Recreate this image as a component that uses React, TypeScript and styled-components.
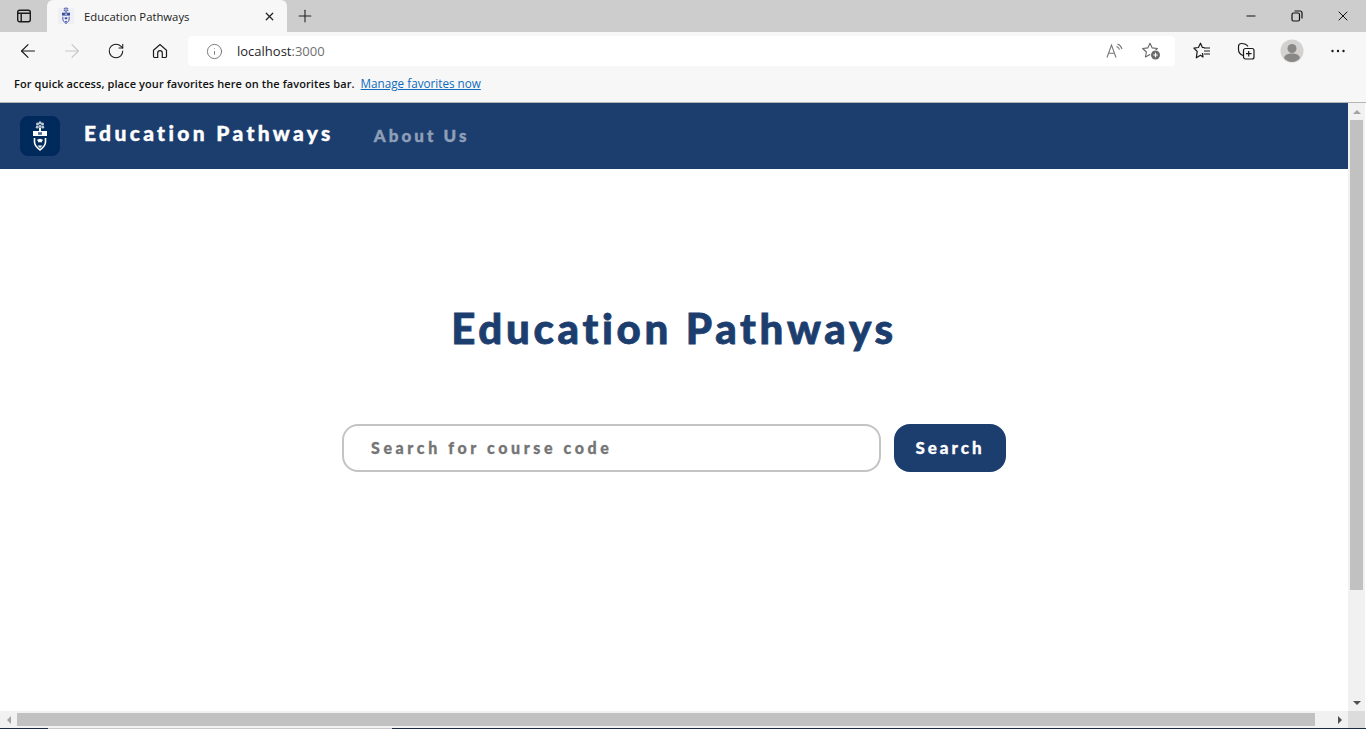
import React from 'react';
import styled, { createGlobalStyle } from 'styled-components';
import { Info, Minus, Plus, X, RotateCw, ArrowLeft, ArrowRight } from 'lucide-react';

const GlobalStyle = createGlobalStyle`
    html, body {
        margin: 0;
        padding: 0;
        height: 100%;
        overflow: hidden;
    }
    body {
        font-family: 'Open Sans', 'Liberation Sans', sans-serif;
    }
`;

const Window = styled.div`
    width: 1366px;
    height: 729px;
    display: flex;
    flex-direction: column;
    background: #fff;
    overflow: hidden;
`;

const TabStrip = styled.div`
    height: 32px;
    flex: none;
    display: flex;
    background: #cdcdcd;
`;

const TabToggle = styled.div`
    width: 47px;
    display: flex;
    align-items: center;
    justify-content: center;
`;

const Tab = styled.div`
    width: 240px;
    height: 32px;
    display: flex;
    align-items: center;
    box-sizing: border-box;
    padding: 0 11px;
    background: #f7f7f7;
    border-radius: 6px 6px 0 0;
    font-size: 11.3px;
    color: #222;
`;

const TabIcon = styled.div`
    width: 16px;
    height: 16px;
    margin-right: 10px;
    background: #eef0f6;
    display: flex;
    align-items: center;
    justify-content: center;
`;

const TabTitle = styled.span`
    flex: 1;
`;

const NewTab = styled.div`
    width: 36px;
    display: flex;
    align-items: center;
    justify-content: center;
`;

const TabSpacer = styled.div`
    flex: 1;
`;

const WindowButton = styled.div`
    width: 46px;
    display: flex;
    align-items: center;
    justify-content: center;
`;

const Toolbar = styled.div`
    height: 38px;
    flex: none;
    display: flex;
    align-items: center;
    background: #f7f7f7;
    box-sizing: border-box;
    padding-left: 6px;
`;

const NavButton = styled.div`
    width: 44px;
    height: 32px;
    display: flex;
    align-items: center;
    justify-content: center;
`;

const AddressBar = styled.div`
    width: 987px;
    height: 30px;
    margin-left: 6px;
    display: flex;
    align-items: center;
    box-sizing: border-box;
    padding: 0 6px 0 18px;
    background: #fff;
    border-radius: 4px;
    font-size: 13px;
    color: #1f1f1f;
`;

const Host = styled.span`
    margin-left: 14px;
    flex: 1;
`;

const Port = styled.span`
    color: #6f6f6f;
`;

const AddressAction = styled.div`
    width: 36px;
    display: flex;
    align-items: center;
    justify-content: center;
`;

const ToolButton = styled.div<{ $width: number }>`
    width: ${(p) => p.$width}px;
    height: 32px;
    display: flex;
    align-items: center;
    justify-content: center;
`;

const ToolGroup = styled.div`
    display: flex;
    margin-left: 5px;
`;

const FavoritesBar = styled.div`
    height: 33px;
    flex: none;
    display: flex;
    align-items: center;
    box-sizing: border-box;
    padding: 0 0 6px 14px;
    background: #f7f7f7;
    border-bottom: 1px solid #b5b5b5;
    font-size: 11px;
    font-weight: 600;
    letter-spacing: 0.09px;
    color: #111;
`;

const FavoritesLink = styled.a`
    margin-left: 6px;
    color: #0f6cbd;
    text-decoration: underline;
    font-size: 11.7px;
    font-weight: 400;
    letter-spacing: 0;
`;

const Viewport = styled.div`
    flex: 1;
    min-height: 0;
    display: flex;
`;

const Page = styled.div`
    flex: 1;
    display: flex;
    flex-direction: column;
`;

const NavBar = styled.nav`
    height: 66px;
    flex: none;
    display: flex;
    align-items: center;
    box-sizing: border-box;
    padding-left: 20px;
    background: #1c3e6e;
`;

const Logo = styled.div`
    width: 40px;
    height: 40px;
    border-radius: 8px;
    background: #002a5c;
    display: flex;
    align-items: center;
    justify-content: center;
    margin-right: 24px;
`;

const Brand = styled.div`
    font-family: Lato, sans-serif;
    font-weight: 900;
    font-size: 21px;
    letter-spacing: 3.35px;
    -webkit-text-stroke: 0.4px #fff;
    color: #fff;
    margin-right: 40px;
    margin-bottom: 8px;
`;

const NavLink = styled.a`
    font-family: Lato, sans-serif;
    font-weight: 900;
    font-size: 17px;
    letter-spacing: 3.05px;
    -webkit-text-stroke: 0.4px #8e9fb8;
    color: #8e9fb8;
    margin-bottom: 2px;
`;

const Hero = styled.main`
    flex: 1;
    display: flex;
    flex-direction: column;
    align-items: center;
`;

const Title = styled.h1`
    margin: 133px 0 0;
    font-family: Lato, sans-serif;
    font-weight: 900;
    font-size: 42px;
    line-height: 52px;
    letter-spacing: 3.7px;
    -webkit-text-stroke: 0.8px #1c3e6e;
    color: #1c3e6e;
`;

const SearchRow = styled.div`
    display: flex;
    gap: 13px;
    margin-top: 70px;
`;

const SearchBox = styled.div`
    width: 539px;
    height: 48px;
    box-sizing: border-box;
    display: flex;
    align-items: center;
    padding: 0 0 2px 27px;
    border: 2px solid #c4c4c4;
    border-radius: 16px;
    font-family: Lato, sans-serif;
    font-weight: 900;
    font-size: 16px;
    letter-spacing: 3.6px;
    -webkit-text-stroke: 0.3px #757575;
    color: #757575;
`;

const SearchButton = styled.button`
    width: 112px;
    height: 48px;
    border: 0;
    padding: 0 0 2px;
    border-radius: 16px;
    background: #1c3e6e;
    color: #fff;
    font-family: Lato, sans-serif;
    font-weight: 900;
    font-size: 17px;
    letter-spacing: 3px;
    -webkit-text-stroke: 0.3px #fff;
`;

const VerticalRail = styled.div`
    width: 18px;
    flex: none;
    background: #fff;
`;

const VerticalTrack = styled.div`
    width: 17px;
    height: 100%;
    display: flex;
    flex-direction: column;
    align-items: center;
    background: #f1f1f1;
`;

const ArrowSlot = styled.div`
    height: 17px;
    width: 17px;
    flex: none;
    display: flex;
    align-items: center;
    justify-content: center;
`;

const VerticalThumb = styled.div`
    width: 13px;
    height: 470px;
    background: #c1c1c1;
`;

const TrackFill = styled.div`
    flex: 1;
`;

const HorizontalTrack = styled.div`
    height: 17px;
    flex: none;
    display: flex;
    align-items: center;
    background: #f1f1f1;
    border-right: 1px solid #fff;
`;

const HorizontalThumb = styled.div`
    width: 1298px;
    height: 13px;
    background: #c1c1c1;
`;

const ScrollCorner = styled.div`
    width: 17px;
    height: 17px;
    background: #dcdcdc;
`;

const Taskbar = styled.div`
    height: 1px;
    flex: none;
    background: #1a2a44;
    display: flex;
    padding-left: 48px;
`;

const TaskGap = styled.div`
    width: 344px;
    background: #c9c9c9;
`;

const Triangle = ({ dir, color }: { dir: 'up' | 'down' | 'left' | 'right'; color: string }) => {
    const pts = {
        up: '1,7 5,3 9,7',
        down: '1,3 9,3 5,7',
        left: '7,1 7,9 3,5',
        right: '3,1 3,9 7,5',
    }[dir];
    return (
        <svg width="10" height="10" viewBox="0 0 10 10">
            <polygon points={pts} fill={color} />
        </svg>
    );
};

// crest drawn on a 14x30 grid, same for the favicon and the navbar logo
const Crest = ({ width, color, back }: { width: number; color: string; back: string }) => (
    <svg width={width} height={(width * 30) / 14} viewBox="0 0 14 30">
        <g fill={color} opacity="0.75">
            <circle cx="4.500" cy="3" r="1.500" />
            <circle cx="9.500" cy="3" r="1.500" />
            <circle cx="7" cy="1.800" r="1.500" />
            <circle cx="4.200" cy="6.200" r="1.400" />
            <circle cx="9.800" cy="6.200" r="1.400" />
            <circle cx="7" cy="5.500" r="1.400" />
        </g>
        <rect x="6" y="7" width="2" height="3" fill={color} />
        <rect x="0" y="10" width="14" height="5" fill={color} />
        <rect x="5" y="11.200" width="4" height="2.600" fill={back} opacity="0.7" />
        <path d="M1.500 17v4c0 3.800 3 6 5.500 8 2.500-2 5.500-4.200 5.500-8v-4" fill="none" stroke={color} strokeWidth="1.600" />
        <path d="M4 18.800l3-1 3 1-1.800 3-1.200-1-1.200 1z" fill={color} />
        <path d="M4.500 24.500h5L7 27z" fill={color} />
    </svg>
);

function App() {
    return (
        <Window>
            <GlobalStyle />
            <TabStrip>
                <TabToggle>
                    <svg width="16" height="16" viewBox="0 0 16 16" fill="none" stroke="#1a1a1a" strokeWidth="1.4">
                        <rect x="1.700" y="2.200" width="12.600" height="11.600" rx="2" />
                        <path d="M1.700 5.200h12.600M5.200 5.200v8.600" />
                    </svg>
                </TabToggle>
                <Tab>
                    <TabIcon>
                        <Crest width={8} color="#3a4c9e" back="#eef0f6" />
                    </TabIcon>
                    <TabTitle>Education Pathways</TabTitle>
                    <X size={13} color="#222" strokeWidth={2.2} />
                </Tab>
                <NewTab>
                    <Plus size={20} color="#222" strokeWidth={1.3} />
                </NewTab>
                <TabSpacer />
                <WindowButton>
                    <Minus size={14} color="#111" strokeWidth={1.7} />
                </WindowButton>
                <WindowButton>
                    <svg width="12" height="12" viewBox="0 0 12 12" fill="none" stroke="#111" strokeWidth="1.2">
                        <rect x="1" y="3" width="7.500" height="8" rx="1.500" />
                        <path d="M3.500 1h5.500a2 2 0 0 1 2 2v5.500" />
                    </svg>
                </WindowButton>
                <WindowButton>
                    <X size={16} color="#111" strokeWidth={1.5} />
                </WindowButton>
            </TabStrip>
            <Toolbar>
                <NavButton>
                    <ArrowLeft size={22} color="#1a1a1a" strokeWidth={1.3} />
                </NavButton>
                <NavButton>
                    <ArrowRight size={22} color="#c8c8c8" strokeWidth={1.3} />
                </NavButton>
                <NavButton>
                    <RotateCw size={18} color="#1a1a1a" strokeWidth={1.4} />
                </NavButton>
                <NavButton>
                    <svg width="16" height="16" viewBox="0 0 16 16" fill="none" stroke="#1a1a1a" strokeWidth="1.2">
                        <path d="M1.500 7.200 8 1.500l6.500 5.700v6a1.300 1.300 0 0 1-1.300 1.300H10.300v-4.500a2.300 2.300 0 0 0-4.600 0v4.500H2.800a1.300 1.300 0 0 1-1.300-1.300z" />
                    </svg>
                </NavButton>
                <AddressBar>
                    <Info size={17} color="#666" strokeWidth={1.2} />
                    <Host>
                        localhost<Port>:3000</Port>
                    </Host>
                    <AddressAction>
                        <svg width="18" height="18" viewBox="0 0 18 18" fill="none" stroke="#777" strokeWidth="1.1">
                            <path d="M1 15.500 5.500 3l4.500 12.500M2.600 11.200h5.800" />
                            <path d="M10.500 4.500c1.500.5 2.500 1.600 3 3.200M11.500 2c2.200.8 3.700 2.400 4.500 5" />
                        </svg>
                    </AddressAction>
                    <AddressAction>
                        <svg width="18" height="18" viewBox="0 0 18 18" fill="none">
                            <path d="M8 1.200l2.200 4.700 5.200.6-3.800 3.500 1 5-4.600-2.500-4.600 2.500 1-5L.6 6.500l5.200-.6z" stroke="#666" strokeWidth="1.100" strokeLinejoin="round" />
                            <circle cx="13.500" cy="13" r="5.300" fill="#fff" />
                            <circle cx="13.500" cy="13" r="4.500" fill="#6a6a6a" />
                            <path d="M13.500 10.800v4.400M11.300 13h4.400" stroke="#fff" strokeWidth="1.100" />
                        </svg>
                    </AddressAction>
                </AddressBar>
                <ToolGroup>
                    <ToolButton $width={44}>
                        <svg width="18" height="18" viewBox="0 0 18 18" fill="none" stroke="#1a1a1a" strokeWidth="1.200" strokeLinejoin="round">
                            <path d="M11.500 5.700 9.300 5.300 7.500 1.200 5.400 5.500l-4.500.7 3.300 3.300-.9 6.300 4.200-2.600 2.500 1.800-.5-4" />
                            <path d="M11 6h6M11 9h6M11 12h6" />
                        </svg>
                    </ToolButton>
                    <ToolButton $width={44}>
                        <svg width="18" height="18" viewBox="0 0 18 18" fill="none" stroke="#1a1a1a" strokeWidth="1.200">
                            <path d="M6 13.500C3.500 12.500 1.500 10.500 1.500 7.500V4.500C1.500 2.800 2.800 1.500 4.500 1.500c2.500 0 5 .8 6.500 3" />
                            <rect x="6.500" y="6.500" width="10.500" height="10.500" rx="2" />
                            <path d="M11.700 9v5.500M9 11.700h5.500" />
                        </svg>
                    </ToolButton>
                    <ToolButton $width={48}>
                        <svg width="24" height="24" viewBox="0 0 24 24">
                            <circle cx="12" cy="12" r="11.500" fill="#d4d2d0" />
                            <circle cx="12" cy="9.500" r="4.500" fill="#8a8886" />
                            <path d="M4 19c1-3.500 4-4.500 8-4.500s7 1 8 4.500c-2 2.500-5 4-8 4s-6-1.500-8-4z" fill="#8a8886" />
                        </svg>
                    </ToolButton>
                    <ToolButton $width={44}>
                        <svg width="16" height="4" viewBox="0 0 16 4" fill="#1a1a1a">
                            <circle cx="2.500" cy="2" r="1.200" />
                            <circle cx="8" cy="2" r="1.200" />
                            <circle cx="13.500" cy="2" r="1.200" />
                        </svg>
                    </ToolButton>
                </ToolGroup>
            </Toolbar>
            <FavoritesBar>
                For quick access, place your favorites here on the favorites bar.
                <FavoritesLink>Manage favorites now</FavoritesLink>
            </FavoritesBar>
            <Viewport>
                <Page>
                    <NavBar>
                        <Logo>
                            <Crest width={14} color="#ffffff" back="#002a5c" />
                        </Logo>
                        <Brand>Education Pathways</Brand>
                        <NavLink>About Us</NavLink>
                    </NavBar>
                    <Hero>
                        <Title>Education Pathways</Title>
                        <SearchRow>
                            <SearchBox>Search for course code</SearchBox>
                            <SearchButton>Search</SearchButton>
                        </SearchRow>
                    </Hero>
                </Page>
                <VerticalRail>
                    <VerticalTrack>
                        <ArrowSlot>
                            <Triangle dir="up" color="#a3a3a3" />
                        </ArrowSlot>
                        <VerticalThumb />
                        <TrackFill />
                        <ArrowSlot>
                            <Triangle dir="down" color="#505050" />
                        </ArrowSlot>
                    </VerticalTrack>
                </VerticalRail>
            </Viewport>
            <HorizontalTrack>
                <ArrowSlot>
                    <Triangle dir="left" color="#a3a3a3" />
                </ArrowSlot>
                <HorizontalThumb />
                <TrackFill />
                <ArrowSlot>
                    <Triangle dir="right" color="#505050" />
                </ArrowSlot>
                <ScrollCorner />
            </HorizontalTrack>
            <Taskbar>
                <TaskGap />
            </Taskbar>
        </Window>
    );
}

export default App;
